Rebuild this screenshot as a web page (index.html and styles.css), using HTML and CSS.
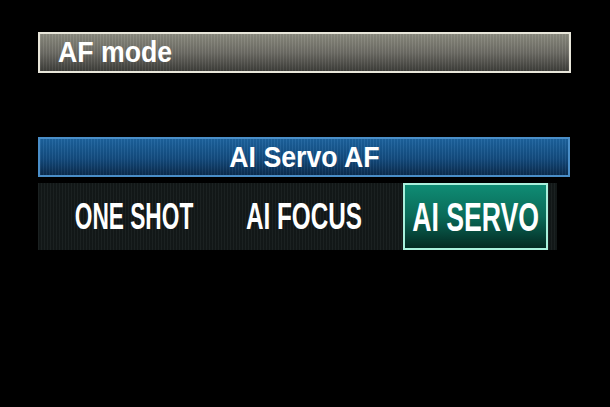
FILE: index.html
```html
<!DOCTYPE html>
<html lang="en">
<head>
    <meta charset="UTF-8">
    <title>AF mode</title>
    <link rel="stylesheet" href="styles.css">
</head>
<body>
    <div class="screen">
        <div class="title-bar"><span class="label">AF mode</span></div>

        <div class="current"><span class="label">AI Servo AF</span></div>
        <div class="options">
            <div class="option opt-one"><span class="narrow">ONE SHOT</span></div>
            <div class="option opt-focus"><span class="narrow">AI FOCUS</span></div>
            <div class="option opt-servo selected"><span class="narrow">AI SERVO</span></div>
        </div>
    </div>
</body>
</html>
```

FILE: styles.css
```css
body {
    margin: 0;
    background: #000;
    font-family: "Liberation Sans", Arial, sans-serif;
    color: #fff;
}
.screen {
    width: 610px;
    height: 407px;
    padding: 32px 0 0 38px;
    box-sizing: border-box;
}
.label {
    display: inline-block;
    font-weight: bold;
    font-size: 30px;
    transform: scaleX(0.89);
    white-space: nowrap;
}
.title-bar {
    width: 533px;
    height: 41px;
    box-sizing: border-box;
    border: 2px solid #e8e6da;
    background:
        repeating-linear-gradient(90deg, rgba(255,255,255,0.05) 0 1px, rgba(0,0,0,0.05) 1px 3px),
        linear-gradient(180deg, #8c8c80 0%, #6e6d66 50%, #3e3e3a 100%);
    padding-left: 18px;
    line-height: 35px;
}
.title-bar .label {
    transform-origin: left center;
}
.current {
    margin-top: 64px;
    width: 532px;
    height: 40px;
    box-sizing: border-box;
    border: 2px solid #4a8ec8;
    background:
        repeating-linear-gradient(90deg, rgba(255,255,255,0.05) 0 1px, rgba(0,0,0,0.05) 1px 3px),
        linear-gradient(180deg, #1c64a0 0%, #134c80 55%, #0b2c4e 100%);
    text-align: center;
    line-height: 35px;
}
.current .label {
    margin-left: 1px;
}
.options {
    margin-top: 6px;
    width: 519px;
    height: 67px;
    display: flex;
    align-items: stretch;
    background:
        repeating-linear-gradient(90deg, rgba(255,255,255,0.03) 0 1px, rgba(0,0,0,0.1) 1px 3px),
        #141a1a;
}
.option {
    display: flex;
    align-items: center;
    justify-content: center;
    box-sizing: border-box;
}
.narrow {
    display: inline-block;
    font-weight: bold;
    font-size: 36px;
    line-height: 40px;
    white-space: nowrap;
    transform: scaleX(0.63);
}
.opt-one {
    width: 192px;
}
.opt-focus {
    width: 148px;
    margin-right: 25px;
}
.opt-focus .narrow {
    transform: scaleX(0.675);
}
.opt-servo {
    width: 145px;
}
.opt-servo .narrow {
    font-size: 41px;
    transform: scaleX(0.65);
}
.selected {
    border: 2px solid #a8f0dc;
    background: linear-gradient(180deg, #0f8c74 0%, #0a6a58 50%, #032a22 100%);
}
```
